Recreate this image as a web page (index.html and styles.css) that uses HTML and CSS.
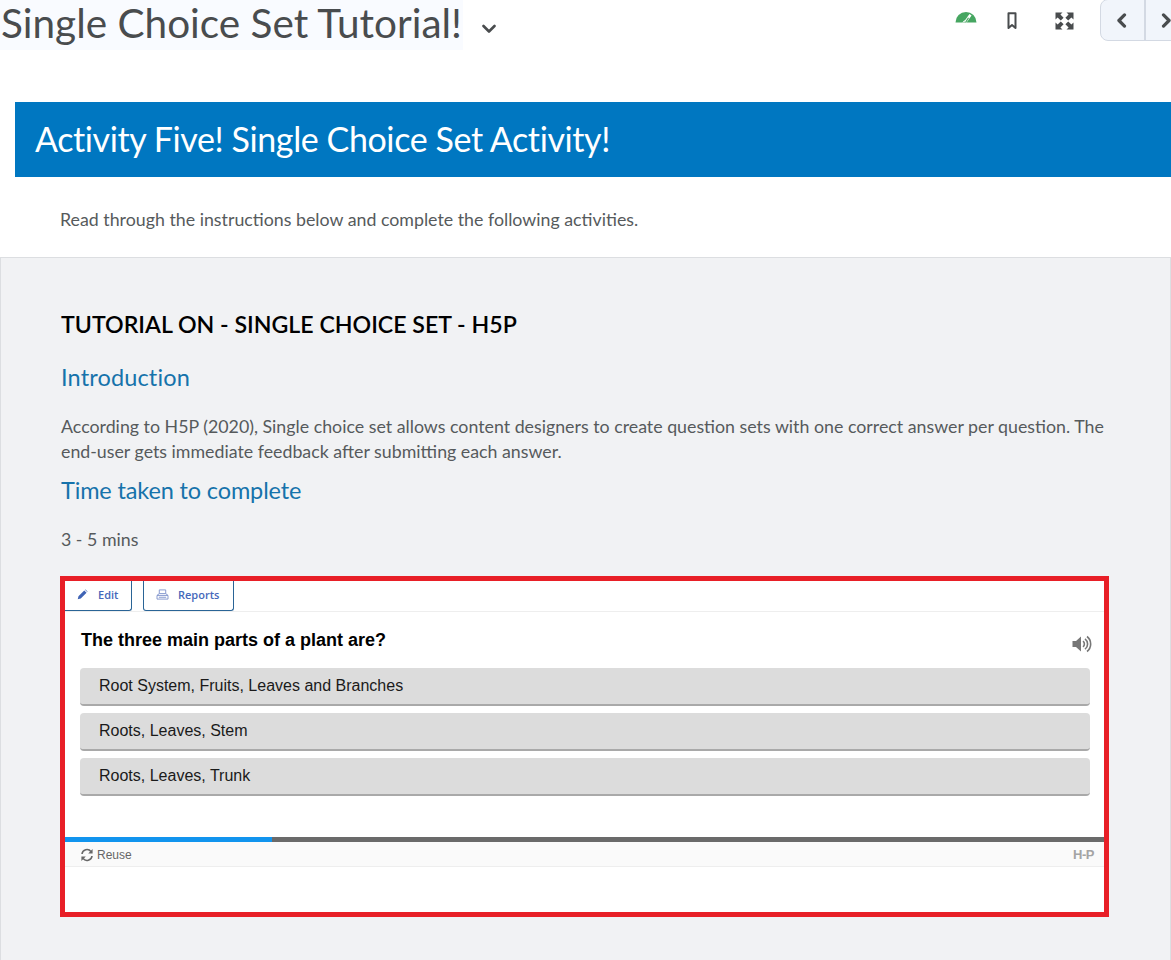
FILE: index.html
```html
<!DOCTYPE html>
<html lang="en">
<head>
  <meta charset="UTF-8">
  <title>Single Choice Set Tutorial!</title>
  <link rel="stylesheet" href="styles.css">
</head>
<body>
  <!-- Top bar -->
  <header class="topbar">
    <div class="titleGroup">
      <h1 class="pageTitle">Single Choice Set Tutorial!</h1>
      <svg class="chevron" viewBox="0 0 14 10" width="14" height="10"><path d="M1.5 2 L7 7.5 L12.5 2" fill="none" stroke="#494c4e" stroke-width="2.6" stroke-linecap="round" stroke-linejoin="round"/></svg>
    </div>
    <div class="tools">
      <svg class="tool toolGauge" viewBox="0 0 22 12" width="22" height="12"><path d="M0.5 11.5 A10.5 10.5 0 0 1 21.5 11.5 Z" fill="#46a661"/><path d="M15.5 3.8 L10 11.5" fill="none" stroke="#fff" stroke-width="2.6"/><path d="M13.5 6.8 L10.5 11.5" fill="none" stroke="#46a661" stroke-width="1.2"/><path d="M8 11.5 A5 3.5 0 0 1 9.5 9.5" fill="none" stroke="#fff" stroke-width="1"/></svg>
      <svg class="tool toolBookmark" viewBox="0 0 10 18" width="10" height="18"><path d="M1.5 1.2 H8.5 V16 L5 13 L1.5 16 Z" fill="none" stroke="#494c4e" stroke-width="2" stroke-linejoin="round"/></svg>
      <svg class="tool toolExpand" viewBox="0 0 19 18" width="19" height="18"><path d="M0.5 0.5 H7.5 L5.4 2.6 L8.6 5.8 L5.8 8.6 L2.6 5.4 L0.5 7.5 Z M18.5 0.5 H11.5 L13.6 2.6 L10.4 5.8 L13.2 8.6 L16.4 5.4 L18.5 7.5 Z M0.5 17.5 H7.5 L5.4 15.4 L8.6 12.2 L5.8 9.4 L2.6 12.6 L0.5 10.5 Z M18.5 17.5 H11.5 L13.6 15.4 L10.4 12.2 L13.2 9.4 L16.4 12.6 L18.5 10.5 Z" fill="#494c4e"/></svg>
      <div class="pager">
        <button class="pagerBtn pagerPrev"><svg viewBox="0 0 10 14" width="11" height="15"><path d="M7.8 1.8 L2.6 7 L7.8 12.2" fill="none" stroke="#494c4e" stroke-width="3" stroke-linecap="round" stroke-linejoin="round"/></svg></button>
        <button class="pagerBtn pagerNext"><svg viewBox="0 0 10 14" width="11" height="15"><path d="M2.2 1.8 L7.4 7 L2.2 12.2" fill="none" stroke="#494c4e" stroke-width="3" stroke-linecap="round" stroke-linejoin="round"/></svg></button>
      </div>
    </div>
  </header>

  <div class="banner">Activity Five! Single Choice Set Activity!</div>

  <p class="lead">Read through the instructions below and complete the following activities.</p>

  <!-- Main panel -->
  <section class="panel">
    <h2 class="tutorialTitle">TUTORIAL ON - SINGLE CHOICE SET - H5P</h2>
    <h3 class="sectionTitle sectionIntro">Introduction</h3>
    <p class="bodyText">According to H5P (2020), Single choice set allows content designers to create question sets with one correct answer per question. The end-user gets immediate feedback after submitting each answer.</p>
    <h3 class="sectionTitle sectionTime">Time taken to complete</h3>
    <p class="bodyText">3 - 5 mins</p>

    <!-- H5P widget -->
    <div class="widget">
      <div class="widgetTabs">
        <a class="tab tabEdit">
          <svg viewBox="0 0 12 12" width="11" height="11"><path d="M0.8 11.2 L1.6 7.9 L7.9 1.6 L10.4 4.1 L4.1 10.4 Z M8.7 0.8 L9.3 0.5 L11.5 2.7 L11.2 3.3 Z" fill="#3f63b5"/></svg>
          Edit
        </a>
        <a class="tab tabReports">
          <svg viewBox="0 0 14 12" width="13" height="11"><path d="M3.5 1 H10.5 V5 H3.5 Z M1 7 H13 V11 H1 Z M1 7 L3.5 5 M13 7 L10.5 5 M3 9 H11" fill="none" stroke="#7f93cc" stroke-width="1"/></svg>
          Reports
        </a>
      </div>
      <div class="question">
        <div class="questionHead">
          <span class="questionText">The three main parts of a plant are?</span>
          <svg class="speaker" viewBox="0 0 20 18" width="20" height="18"><path d="M0.5 6 H4 L9 1.5 V16.5 L4 12 H0.5 Z" fill="#777"/><path d="M11 6.2 A3.5 3.5 0 0 1 11 11.8 M13 3.8 A6.5 6.5 0 0 1 13 14.2 M15 1.5 A9.5 9.5 0 0 1 15 16.5" fill="none" stroke="#777" stroke-width="1.6"/></svg>
        </div>
        <div class="answers">
          <div class="answer">Root System, Fruits, Leaves and Branches</div>
          <div class="answer">Roots, Leaves, Stem</div>
          <div class="answer">Roots, Leaves, Trunk</div>
        </div>
      </div>
      <div class="progress"><div class="progressFill"></div></div>
      <div class="widgetFooter">
        <span class="reuse">
          <svg viewBox="0 0 14 14" width="14" height="14"><path d="M2 6 A5 5 0 0 1 11 3.6 M12 8 A5 5 0 0 1 3 10.4" fill="none" stroke="#666" stroke-width="1.6"/><path d="M12.6 1 V5.4 H8.2 Z M1.4 13 V8.6 H5.8 Z" fill="#666"/></svg>
          Reuse
        </span>
        <span class="h5pLogo">H-P</span>
      </div>
    </div>
  </section>
</body>
</html>
```

FILE: styles.css
```css
* {
  box-sizing: border-box;
}

html, body {
  height: 960px;
  overflow: hidden;
}

body {
  margin: 0;
  background: #fff;
  font-family: "Lato", sans-serif;
  color: #565a5c;
}

/* Top bar */
.topbar {
  height: 102px;
  display: flex;
  justify-content: space-between;
  align-items: flex-start;
}

.titleGroup {
  display: flex;
  align-items: center;
}

.pageTitle {
  margin: 0;
  height: 50px;
  padding: 0 1px;
  background: #f9fbff;
  font-size: 40.5px;
  font-weight: 400;
  line-height: 45px;
  color: #494c4e;
  white-space: nowrap;
}

.chevron {
  margin: 8px 0 0 19px;
}

.tools {
  display: flex;
  align-items: center;
  width: 216px;
  overflow: hidden;
}

.tool {
  flex: none;
}

.toolGauge {
  margin-bottom: 7px;
}

.toolBookmark {
  margin-left: 30px;
}

.toolExpand {
  margin-left: 38px;
}

.pager {
  flex: none;
  display: flex;
  height: 42px;
  margin-left: 26px;
  margin-top: -1px;
  background: #f1f5fb;
  border: 1px solid #d3d9e3;
  border-radius: 8px;
}

.pagerBtn {
  width: 43px;
  padding: 0;
  border: 0;
  background: none;
  display: flex;
  align-items: center;
  justify-content: center;
}

.pagerPrev {
  padding-right: 3px;
}

.pagerNext {
  border-left: 2px solid #d3d9e3;
}

/* Banner */
.banner {
  height: 75px;
  margin-left: 15px;
  padding-left: 20px;
  background: #0077c1;
  color: #fff;
  font-size: 34px;
  line-height: 73px;
  letter-spacing: -0.4px;
}

.lead {
  margin: 0;
  height: 80px;
  padding: 30px 0 0 60px;
  font-size: 17.8px;
  line-height: 24px;
}

/* Main panel */
.panel {
  height: 703px;
  padding: 0 60px;
  background: #f1f2f4;
  border: 1px solid #dcdee1;
  border-bottom: 0;
}

.tutorialTitle {
  margin: 0;
  padding-top: 52px;
  font-size: 23.15px;
  font-weight: 600;
  line-height: 28px;
  color: #000;
}

.sectionTitle {
  margin: 25px 0 0;
  font-size: 23.5px;
  font-weight: 400;
  line-height: 28px;
  color: #1673ab;
}

.sectionIntro {
  letter-spacing: 0.15px;
}

.sectionTime {
  margin-top: 12px;
  letter-spacing: -0.14px;
}

.bodyText {
  margin: 23px 0 0;
  font-size: 17.8px;
  line-height: 25px;
  width: 1060px;
}

/* H5P widget */
.widget {
  width: 1049px;
  height: 341px;
  margin: 24px 0 0 -1px;
  background: #fff;
  border: 5px solid #e81f27;
  font-family: "Liberation Sans", Arial, sans-serif;
  display: flex;
  flex-direction: column;
}

.widgetTabs {
  height: 31px;
  display: flex;
  gap: 11px;
  border-bottom: 1px solid #eeeeee;
  flex: none;
}

.tab {
  height: 30px;
  display: flex;
  align-items: center;
  padding-bottom: 2px;
  border: 1px solid #2a6496;
  border-top: 0;
  border-radius: 0 0 3px 3px;
  font-family: "Open Sans", sans-serif;
  font-size: 11px;
  font-weight: 600;
  color: #4568bb;
  background: #fff;
}

.tabEdit {
  width: 67px;
  padding-left: 12px;
  gap: 10px;
  border-left: 0;
  border-radius: 0 0 3px 0;
}

.tabReports {
  width: 91px;
  padding-left: 12px;
  gap: 9px;
}

.question {
  height: 225px;
  padding: 0 14px 0 15px;
  flex: none;
}

.questionHead {
  height: 56px;
  display: flex;
  justify-content: space-between;
}

.questionText {
  margin: 18px 0 0 1px;
  font-size: 18px;
  font-weight: 700;
  line-height: 20px;
  color: #000;
}

.speaker {
  margin: 23px -2px 0 0;
}

.answers {
  display: flex;
  flex-direction: column;
  gap: 7px;
}

.answer {
  height: 38px;
  padding-left: 19px;
  background: #dcdcdc;
  border-bottom: 2px solid #a9a9a9;
  border-radius: 4px;
  font-size: 16px;
  line-height: 35px;
  color: #1a1a1a;
}

.progress {
  height: 5px;
  background: #6a6a6a;
  flex: none;
}

.progressFill {
  width: 19.9%;
  height: 100%;
  background: #1194ee;
}

.widgetFooter {
  height: 25px;
  padding: 1px 10px 0 15px;
  display: flex;
  justify-content: space-between;
  align-items: center;
  background: #fafafa;
  border-bottom: 1px solid #eeeeee;
  flex: none;
}

.reuse {
  display: flex;
  align-items: center;
  gap: 3px;
  font-size: 12px;
  color: #666;
}

.h5pLogo {
  font-size: 13px;
  font-weight: 700;
  letter-spacing: -0.5px;
  color: #a4a4a4;
}
```
